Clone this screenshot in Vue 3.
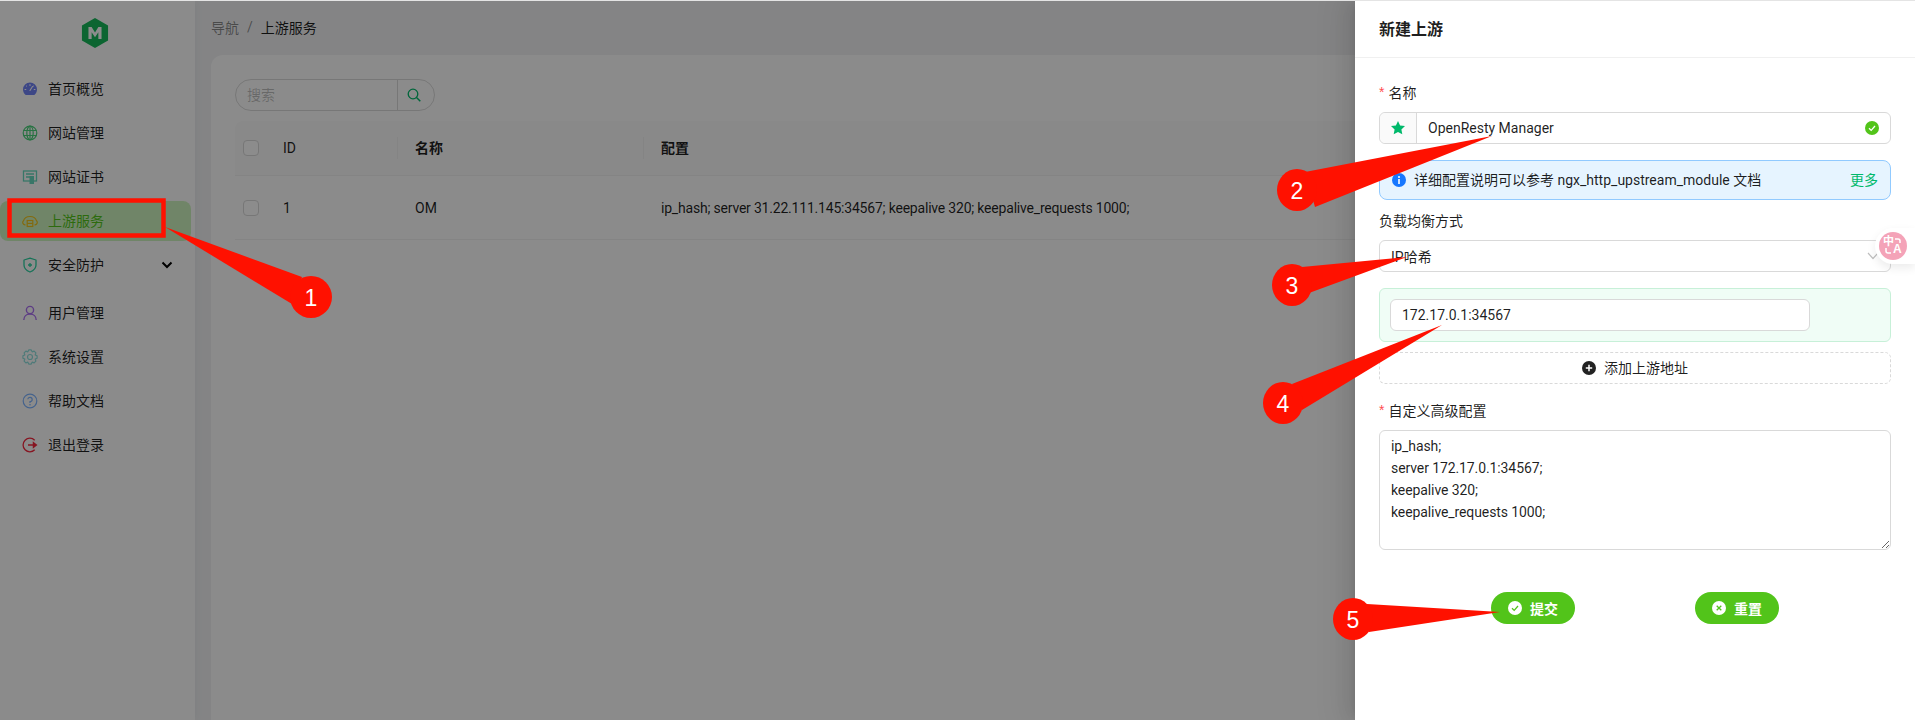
<script setup>
import { ref } from 'vue'

const gearPath = (() => {
  const cx = 8, cy = 8, teeth = 8
  let d = ''
  for (let i = 0; i < teeth; i++) {
    const a = (i / teeth) * Math.PI * 2
    const step = (Math.PI * 2) / teeth
    const pts = [
      [5.6, a - step * 0.5],
      [7.2, a - step * 0.22],
      [7.2, a + step * 0.22],
    ]
    pts.forEach(([r, t], j) => {
      const x = (cx + r * Math.cos(t)).toFixed(2)
      const y = (cy + r * Math.sin(t)).toFixed(2)
      d += (i === 0 && j === 0 ? 'M' : 'L') + x + ' ' + y
    })
  }
  return d + 'Z'
})()

const menu = [
  { key: 'home', label: '首页概览' },
  { key: 'site', label: '网站管理' },
  { key: 'cert', label: '网站证书' },
  { key: 'upstream', label: '上游服务', active: true },
  { key: 'shield', label: '安全防护', arrow: true },
  { key: 'user', label: '用户管理' },
  { key: 'gear', label: '系统设置' },
  { key: 'help', label: '帮助文档' },
  { key: 'logout', label: '退出登录' },
]

const conf = ref('ip_hash;\nserver 172.17.0.1:34567;\nkeepalive 320;\nkeepalive_requests 1000;')

const callouts = [
  { n: 1, cx: 311, cy: 297, rx: 21, ry: 21, tail: '165,227 302,277 292,304' },
  { n: 2, cx: 1297, cy: 190, rx: 20, ry: 21, tail: '1492,136 1305,172 1315,207' },
  { n: 3, cx: 1292, cy: 285, rx: 20, ry: 21, tail: '1407,257 1302,267 1309,293' },
  { n: 4, cx: 1283, cy: 403, rx: 20, ry: 21, tail: '1442,325 1292,384 1302,410' },
  { n: 5, cx: 1353, cy: 619, rx: 20, ry: 21, tail: '1500,612 1367,604 1369,632' },
]
</script>

<template>
  <div class="root">
    <div class="page">
      <aside class="side">
        <div class="logo">
          <svg width="28" height="32" viewBox="0 0 30 33">
            <path d="M15 0.5 29 8.5V24.5L15 32.5 1 24.5V8.5Z" fill="#16b85a" />
            <path d="M8 23V10h3.4L15 16l3.6-6H22v13h-3.4v-7.4L15 21l-3.6-5.4V23Z" fill="#fff" />
          </svg>
        </div>
        <ul class="menu">
          <li v-for="m in menu" :key="m.key" class="item" :class="{ active: m.active, sub: m.arrow }">
            <svg class="ico" width="16" height="16" viewBox="0 0 16 16">
              <template v-if="m.key === 'home'">
                <path d="M8 1.500a7 7 0 0 1 7 7c0 2.200-1 4-2.400 5.200-.3.3-.6.3-1 .3H4.400c-.4 0-.7 0-1-.3C2 12.500 1 10.700 1 8.500a7 7 0 0 1 7-7Z" fill="#6f81f5" />
                <path d="M8 9.500 10.500 5.500M8 3.500v1M4.500 5v.01M11.500 5v.01M3 8.500h.8M12.200 8.500h.8" stroke="#fff" stroke-width="1.100" stroke-linecap="round" fill="none" />
              </template>
              <template v-else-if="m.key === 'site'">
                <g fill="none" stroke="#4cd07a" stroke-width="1.200">
                  <circle cx="8" cy="8" r="6.800" />
                  <ellipse cx="8" cy="8" rx="3.200" ry="6.800" />
                  <path d="M8 1v14M1.500 5.500h13M1.500 10.500h13" />
                </g>
              </template>
              <template v-else-if="m.key === 'cert'">
                <g fill="none" stroke="#66d8bd" stroke-width="1.300">
                  <rect x="1.500" y="2" width="13" height="10" />
                  <path d="M4 5h8M4 8h4" />
                </g>
                <rect x="7.500" y="7" width="4.500" height="8" fill="#66d8bd" />
              </template>
              <template v-else-if="m.key === 'upstream'">
                <g fill="none" stroke="#eec21c" stroke-width="1.200">
                  <path d="M3.500 11.800H3A2.300 2.300 0 0 1 1.500 7.800C2.300 4.800 4.800 3.500 8 3.500s5.700 1.300 6.500 4.300A2.300 2.300 0 0 1 13 11.800h-.5" />
                  <rect x="5.200" y="7.500" width="5.600" height="6" />
                  <path d="M5.200 10.400h5.600" />
                </g>
              </template>
              <template v-else-if="m.key === 'shield'">
                <path d="M8 1.200 14 3v5c0 3.200-2.300 5.600-6 7C4.300 13.600 2 11.200 2 8V3Z" fill="none" stroke="#2bd0a0" stroke-width="1.300" stroke-linejoin="round" />
                <path d="M8 6v4M6 8h4" stroke="#2bd0a0" stroke-width="1.300" />
              </template>
              <template v-else-if="m.key === 'user'">
                <g fill="none" stroke="#aa6ff0" stroke-width="1.400">
                  <circle cx="8" cy="5" r="3.600" />
                  <path d="M1.800 15c0-3.500 2.600-6 6.200-6s6.200 2.500 6.200 6" />
                </g>
              </template>
              <template v-else-if="m.key === 'gear'">
                <path :d="gearPath" fill="none" stroke="#8fdfdc" stroke-width="1.200" stroke-linejoin="round" />
                <circle cx="8" cy="8" r="2.500" fill="none" stroke="#8fdfdc" stroke-width="1.200" />
              </template>
              <template v-else-if="m.key === 'help'">
                <circle cx="8" cy="8" r="6.800" fill="none" stroke="#7fb4ff" stroke-width="1.200" />
                <path d="M5.800 6.300A2.200 2.200 0 1 1 8 8.700v1.300" fill="none" stroke="#7fb4ff" stroke-width="1.200" />
                <circle cx="8" cy="11.800" r=".8" fill="#7fb4ff" />
              </template>
              <template v-else>
                <path d="M12.700 3.200A6.800 6.800 0 1 0 12.700 12.800" fill="none" stroke="#f5283f" stroke-width="1.300" />
                <path d="M6 8h8M11.500 5.800 14.300 8l-2.800 2.200Z" fill="#f5283f" stroke="#f5283f" stroke-width="1.500" />
              </template>
            </svg>
            <span class="lbl">{{ m.label }}</span>
            <svg v-if="m.arrow" class="chev" width="12" height="8" viewBox="0 0 12 8">
              <path d="M1.500 1.500 6 6l4.500-4.500" fill="none" stroke="#000" stroke-width="2" />
            </svg>
          </li>
        </ul>
      </aside>

      <main class="main">
        <div class="crumb">
          <span class="c-muted">导航</span><span class="c-sep">/</span><span class="c-cur">上游服务</span>
        </div>
        <section class="card">
          <div class="search">
            <input class="s-input" placeholder="搜索" />
            <span class="s-btn">
              <svg width="14" height="14" viewBox="0 0 14 14">
                <circle cx="6" cy="6" r="4.800" fill="none" stroke="#00b96b" stroke-width="1.300" />
                <path d="m9.500 9.500 3.800 3.800" stroke="#00b96b" stroke-width="1.500" />
              </svg>
            </span>
          </div>
          <div class="table">
            <div class="tr th">
              <div class="cell ck"><span class="box"></span></div>
              <div class="cell id">ID</div>
              <div class="cell sep"><span class="up">名称</span></div>
              <div class="cell sep"><span class="up">配置</span></div>
            </div>
            <div class="tr td">
              <div class="cell ck"><span class="box"></span></div>
              <div class="cell id">1</div>
              <div class="cell">OM</div>
              <div class="cell conf">ip_hash; server 31.22.111.145:34567; keepalive 320; keepalive_requests 1000;</div>
            </div>
          </div>
        </section>
      </main>
    </div>

    <div class="mask"></div>

    <aside class="drawer">
      <header class="d-head">新建上游</header>
      <div class="d-body">
        <label class="f-label"><i>*</i>名称</label>
        <div class="group">
          <span class="addon">
            <svg width="16" height="16" viewBox="0 0 16 16"><path d="M8 1l2.100 4.500 4.900.6-3.600 3.300.9 4.900L8 11.900l-4.300 2.400.9-4.900L1 6.100l4.900-.6Z" fill="#00b96b" /></svg>
          </span>
          <input class="g-input" value="OpenResty Manager" readonly />
          <svg class="ok" width="14" height="14" viewBox="0 0 14 14">
            <circle cx="7" cy="7" r="7" fill="#52c41a" />
            <path d="m4 7.200 2.200 2.200L10 5" fill="none" stroke="#fff" stroke-width="1.300" />
          </svg>
        </div>

        <div class="alert">
          <svg width="14" height="14" viewBox="0 0 14 14">
            <circle cx="7" cy="7" r="7" fill="#1677ff" />
            <circle cx="7" cy="4" r="1" fill="#fff" />
            <rect x="6.200" y="6" width="1.600" height="5" fill="#fff" />
          </svg>
          <span class="a-text up">详细配置说明可以参考 ngx_http_upstream_module 文档</span>
          <span class="a-more up">更多</span>
        </div>

        <label class="f-label second">负载均衡方式</label>
        <div class="select">
          <span>IP哈希</span>
          <svg width="12" height="8" viewBox="0 0 12 8"><path d="M1 1l5 5.500L11 1" fill="none" stroke="#bfbfbf" stroke-width="1.200" /></svg>
        </div>

        <div class="addr">
          <input class="addr-input" value="172.17.0.1:34567" readonly />
        </div>
        <div class="add">
          <svg width="14" height="14" viewBox="0 0 14 14">
            <circle cx="7" cy="7" r="7" fill="#222" />
            <path d="M7 3.800v6.400M3.800 7h6.400" stroke="#fff" stroke-width="1.500" />
          </svg>
          <span class="up">添加上游地址</span>
        </div>

        <label class="f-label third"><i>*</i>自定义高级配置</label>
        <textarea class="area" v-model="conf"></textarea>

        <div class="actions">
          <button class="btn" type="button">
            <svg width="14" height="14" viewBox="0 0 14 14">
              <circle cx="7" cy="7" r="7" fill="#fff" />
              <path d="m4 7.200 2.200 2.200L10 5" fill="none" stroke="#52c41a" stroke-width="1.300" />
            </svg>
            <span>提交</span>
          </button>
          <button class="btn" type="button">
            <svg width="14" height="14" viewBox="0 0 14 14">
              <circle cx="7" cy="7" r="7" fill="#fff" />
              <path d="m4.700 4.700 4.600 4.600M9.300 4.700l-4.600 4.600" fill="none" stroke="#52c41a" stroke-width="1.300" />
            </svg>
            <span>重置</span>
          </button>
        </div>
      </div>
    </aside>

    <div class="trans">
      <span class="t-circle">
        <b class="t-zh">中</b>
        <b class="t-a">A</b>
        <svg class="t-arcs" width="28" height="28" viewBox="0 0 28 28">
          <path d="M16 7h3a2 2 0 0 1 2 2v2M7 16v3a2 2 0 0 0 2 2h3" fill="none" stroke="#fff" stroke-width="1.500" />
        </svg>
      </span>
    </div>

    <svg class="marks" width="1915" height="720" viewBox="0 0 1915 720">
      <rect x="9.500" y="200.500" width="154" height="35" fill="none" stroke="#ff1100" stroke-width="4.500" />
      <g v-for="c in callouts" :key="c.n">
        <polygon :points="c.tail" fill="#ff1100" />
        <ellipse :cx="c.cx" :cy="c.cy" :rx="c.rx" :ry="c.ry" fill="#ff1100" />
        <text :x="c.cx" :y="c.cy + 8.500" text-anchor="middle" class="num">{{ c.n }}</text>
      </g>
    </svg>
  </div>
</template>

<style>
html, body { margin: 0; background: #fff; }
</style>

<style scoped>
.root {
  position: relative;
  width: 1915px;
  height: 720px;
  overflow: hidden;
  font-family: Roboto, "Noto Sans CJK SC", sans-serif;
  font-size: 14px;
  color: rgba(0, 0, 0, 0.88);
  box-sizing: border-box;
  border-top: 1px solid #e4e4e4;
}
.up { padding-bottom: 2px; }
.page { display: flex; height: 719px; background: #f0f1f3; }
.side { width: 195px; flex: none; background: #fefefe; box-shadow: 2px 0 8px rgba(0, 0, 0, 0.03); }
.logo { height: 68px; display: flex; justify-content: center; padding: 16px 5px 0 0; box-sizing: border-box; }
.menu { list-style: none; margin: 0; padding: 0; }
.item {
  height: 40px;
  margin: 0 4px 4px 0;
  padding-left: 22px;
  display: flex;
  align-items: center;
  gap: 10px;
  border-radius: 8px;
  font-size: 14px;
}
.item.sub { margin-bottom: 8px; }
.item.active { background: #cdf3bd; color: #52c41a; }
.ico { flex: none; }
.lbl { padding-bottom: 2px; }
.chev { margin-left: auto; margin-right: 18px; }

.main { flex: 1; min-width: 0; padding-left: 16px; display: flex; flex-direction: column; }
.crumb { height: 54px; box-sizing: border-box; padding-bottom: 2px; display: flex; align-items: center; gap: 8px; color: rgba(0, 0, 0, 0.88); }
.c-muted, .c-sep { color: rgba(0, 0, 0, 0.45); }
.card { flex: 1; background: #fefefe; border-radius: 12px 0 0 0; padding: 24px; }
.search { display: flex; width: 200px; height: 32px; box-sizing: border-box; border: 1px solid #d9d9d9; border-radius: 16px; }
.s-input {
  width: 161px;
  box-sizing: border-box;
  border: none;
  outline: none;
  padding: 0 0 0 11px;
  background: transparent;
  font: inherit;
  border-radius: 16px 0 0 16px;
}
.s-input::placeholder { color: rgba(0, 0, 0, 0.25); }
.s-btn { flex: 1; display: flex; align-items: center; justify-content: center; border-left: 1px solid #d9d9d9; padding-right: 4px; }
.table { margin-top: 10px; }
.tr { display: grid; grid-template-columns: 30px 132px 246px 1fr; align-items: center; border-bottom: 1px solid #f0f0f0; }
.th { height: 55px; box-sizing: border-box; background: #fafafa; border-radius: 8px 8px 0 0; font-weight: 600; }
.td { height: 64px; box-sizing: border-box; }
.cell { padding-left: 18px; position: relative; white-space: nowrap; }
.cell.ck { padding-left: 8px; display: flex; }
.cell.id { font-weight: 400; }
.cell.conf { letter-spacing: -0.2px; }
.cell .up { display: inline-block; }
.sep::before {
  content: "";
  position: absolute;
  left: 0;
  top: 50%;
  width: 1px;
  height: 22px;
  transform: translateY(-50%);
  background: #f0f0f0;
}
.box { width: 16px; height: 16px; box-sizing: border-box; border: 1px solid #d9d9d9; border-radius: 4px; background: #fff; }

.mask { position: absolute; inset: 0; background: rgba(0, 0, 0, 0.45); }

.drawer {
  position: absolute;
  top: 0;
  right: 0;
  bottom: 0;
  width: 560px;
  background: #fff;
  box-shadow: -6px 0 16px rgba(0, 0, 0, 0.08), -3px 0 6px -4px rgba(0, 0, 0, 0.12), -9px 0 28px 8px rgba(0, 0, 0, 0.05);
}
.d-head {
  height: 57px;
  box-sizing: border-box;
  padding: 0 0 2px 24px;
  display: flex;
  align-items: center;
  border-bottom: 1px solid #f0f0f0;
  font-size: 16px;
  font-weight: 600;
}
.d-body { padding: 24px 24px 0; }
.f-label { display: flex; align-items: center; height: 22px; box-sizing: border-box; padding-bottom: 2px; margin-bottom: 8px; }
.f-label i { color: #ff4d4f; font-style: normal; margin-right: 4px; font-family: "Liberation Sans", sans-serif; }
.second { margin-top: 10px; }
.third { margin-top: 16px; }
.group {
  position: relative;
  display: flex;
  height: 32px;
  box-sizing: border-box;
  border: 1px solid #d9d9d9;
  border-radius: 6px;
}
.addon {
  width: 36px;
  flex: none;
  display: flex;
  align-items: center;
  justify-content: center;
  background: #fafafa;
  border-right: 1px solid #d9d9d9;
  border-radius: 6px 0 0 6px;
}
.g-input {
  flex: 1;
  border: none;
  outline: none;
  padding: 0 11px;
  font: inherit;
  color: inherit;
  background: transparent;
}
.ok { position: absolute; right: 11px; top: 8px; }
.alert {
  margin-top: 16px;
  height: 40px;
  box-sizing: border-box;
  padding: 0 12px;
  display: flex;
  align-items: center;
  gap: 8px;
  background: #e6f4ff;
  border: 1px solid #91caff;
  border-radius: 8px;
}
.a-more { margin-left: auto; color: #00b96b; }
.select {
  position: relative;
  height: 32px;
  box-sizing: border-box;
  padding: 0 11px;
  display: flex;
  align-items: center;
  justify-content: space-between;
  border: 1px solid #d9d9d9;
  border-radius: 6px;
}
.addr {
  margin-top: 16px;
  height: 54px;
  box-sizing: border-box;
  padding: 10px;
  background: #f0fdf6;
  border: 1px solid #c7f0d8;
  border-radius: 6px;
}
.addr-input {
  display: block;
  width: 420px;
  height: 32px;
  box-sizing: border-box;
  padding: 0 11px;
  border: 1px solid #d9d9d9;
  border-radius: 6px;
  outline: none;
  font: inherit;
  color: inherit;
  background: #fff;
}
.add {
  margin-top: 10px;
  height: 32px;
  box-sizing: border-box;
  display: flex;
  align-items: center;
  justify-content: center;
  gap: 8px;
  border: 1px dashed #d9d9d9;
  border-radius: 6px;
}
.area {
  display: block;
  width: 100%;
  height: 120px;
  box-sizing: border-box;
  padding: 4px 11px;
  border: 1px solid #d9d9d9;
  border-radius: 6px;
  outline: none;
  font: inherit;
  line-height: 22px;
  letter-spacing: -0.1px;
  color: inherit;
  resize: vertical;
}
.actions { margin-top: 42px; display: flex; justify-content: center; gap: 120px; }
.btn {
  width: 84px;
  height: 32px;
  padding: 0;
  display: flex;
  align-items: center;
  justify-content: center;
  gap: 8px;
  border: none;
  border-radius: 16px;
  background: #52c41a;
  color: #fff;
  font: inherit;
  font-weight: 600;
}

.trans {
  position: absolute;
  right: 0;
  top: 227px;
  width: 40px;
  height: 36px;
  box-sizing: border-box;
  background: #fff;
  border-radius: 18px 0 0 18px;
  box-shadow: 0 4px 10px rgba(0, 0, 0, 0.08);
  display: flex;
  align-items: center;
  padding-left: 4px;
}
.t-circle {
  position: relative;
  width: 28px;
  height: 28px;
  border-radius: 50%;
  background: #f4a3b8;
  color: #fff;
  font-family: "Liberation Sans", "Noto Sans CJK SC", sans-serif;
  line-height: 1;
}
.t-zh { position: absolute; left: 4px; top: 4px; font-size: 11px; }
.t-a { position: absolute; left: 14px; top: 11px; font-size: 12px; }
.t-arcs { position: absolute; left: 0; top: 0; }

.marks { position: absolute; left: 0; top: -1px; pointer-events: none; }
.num { fill: #fff; font-family: "Liberation Sans", sans-serif; font-size: 23px; }
</style>
